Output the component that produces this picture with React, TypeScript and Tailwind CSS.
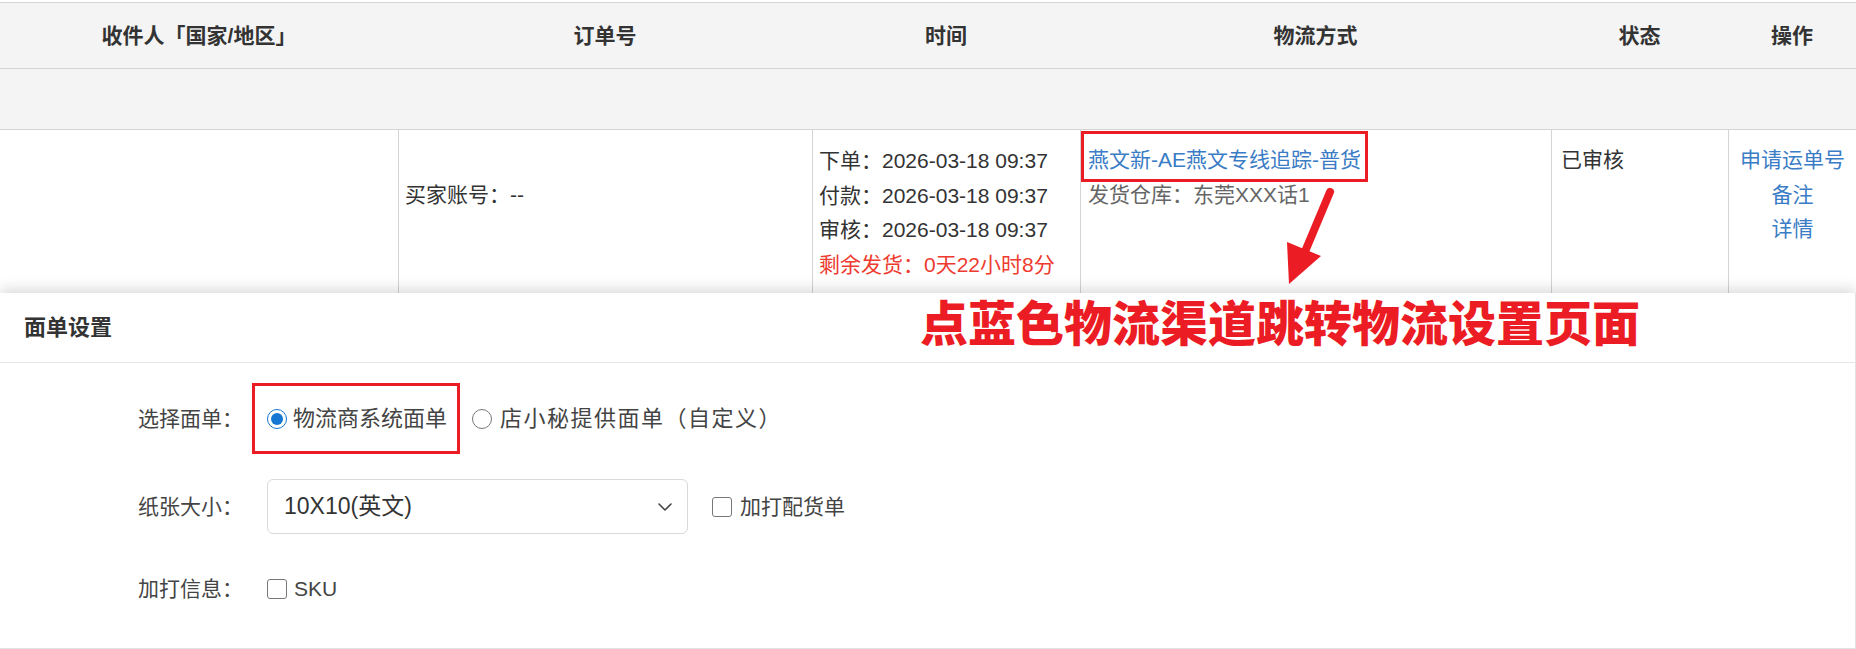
import React from "react";
import { ChevronDown } from "lucide-react";

const font = { fontFamily: '"Liberation Sans", "Noto Sans CJK SC", sans-serif' };

export default function App() {
  return (
    <div
      className="relative w-[1856px] h-[649px] overflow-hidden bg-white text-[21px] text-[#333]"
      style={font}
    >
      <div className="pt-[2px]">
        {/* header row */}
        <div className="grid grid-cols-[398px_414px_268px_471px_177px_128px] h-[67px] bg-[#f4f4f4] border-y border-[#d4d4d4] font-bold text-[#333]">
          <div className="flex items-center justify-center">收件人「国家/地区」</div>
          <div className="flex items-center justify-center">订单号</div>
          <div className="flex items-center justify-center">时间</div>
          <div className="flex items-center justify-center">物流方式</div>
          <div className="flex items-center justify-center">状态</div>
          <div className="flex items-center justify-center">操作</div>
        </div>
        {/* gray band */}
        <div className="h-[61px] bg-[#f4f4f4] border-b border-[#d4d4d4]" />
        {/* data row */}
        <div className="grid grid-cols-[398px_414px_268px_471px_177px_128px] h-[163px] leading-[34.5px]">
          <div />
          <div className="border-l border-[#d4d4d4] pl-[6px] pt-[48px]">买家账号：--</div>
          <div className="border-l border-[#d4d4d4] pl-[6px] pt-[14px]">
            <div>下单：2026-03-18 09:37</div>
            <div>付款：2026-03-18 09:37</div>
            <div>审核：2026-03-18 09:37</div>
            <div className="text-[#ee3b30]">剩余发货：0天22小时8分</div>
          </div>
          <div className="relative border-l border-[#d4d4d4] pl-[7px] pt-[13px]">
            <div className="text-[#3a7cc5]">燕文新-AE燕文专线追踪-普货</div>
            <div className="text-[#666]">发货仓库：东莞XXX话1</div>
            <div className="absolute left-[0px] top-[1px] w-[287px] h-[51px] border-[3.5px] border-[#ec1c24]" />
          </div>
          <div className="border-l border-[#d4d4d4] pl-[9px] pt-[13px]">已审核</div>
          <div className="border-l border-[#d4d4d4] pt-[13px] text-center text-[#3a7cc5]">
            <div>申请运单号</div>
            <div>备注</div>
            <div>详情</div>
          </div>
        </div>
      </div>

      {/* panel */}
      <div className="relative z-10 bg-white border-r border-b border-[#e2e2e2] shadow-[0_-5px_12px_rgba(0,0,0,0.13)]">
        <div className="h-[70px] flex items-center pl-[24px] font-bold text-[22px] border-b border-[#e6e6e6]">面单设置</div>
        <div className="pt-[20px] pb-[42px] text-[#444]">
          <div className="flex items-center">
            <div className="w-[252px] pl-[138px] shrink-0">选择面单：</div>
            <div className="flex items-center w-[208px] h-[71px] border-[3px] border-[#ec1c24] pl-[12px] shrink-0">
              <span className="shrink-0 w-[20px] h-[20px] rounded-full border-[1.5px] border-[#1677d2] flex items-center justify-center">
                <span className="w-[12px] h-[12px] rounded-full bg-[#1677d2]" />
              </span>
              <span className="ml-[6px] text-[22px] whitespace-nowrap">物流商系统面单</span>
            </div>
            <div className="flex items-center ml-[12px]">
              <span className="shrink-0 w-[20px] h-[20px] rounded-full border-[1.5px] border-[#777]" />
              <span className="ml-[8px] text-[22px] tracking-[1.5px] whitespace-nowrap">店小秘提供面单（自定义）</span>
            </div>
          </div>
          <div className="flex items-center mt-[25px]">
            <div className="w-[267px] pl-[138px] shrink-0">纸张大小：</div>
            <div className="flex items-center justify-between w-[421px] h-[55px] border border-[#d9d9d9] rounded-[6px] pl-[16px] pr-[10px] shrink-0">
              <span className="text-[#333] text-[23px]">10X10(英文)</span>
              <ChevronDown size={24} strokeWidth={1.6} className="text-[#444]" />
            </div>
            <div className="flex items-center ml-[24px]">
              <span className="shrink-0 w-[20px] h-[20px] rounded-[3px] border-[1.5px] border-[#777]" />
              <span className="ml-[8px] whitespace-nowrap">加打配货单</span>
            </div>
          </div>
          <div className="flex items-center mt-[38px] h-[34px]">
            <div className="w-[267px] pl-[138px] shrink-0">加打信息：</div>
            <span className="shrink-0 w-[20px] h-[20px] rounded-[3px] border-[1.5px] border-[#777]" />
            <span className="ml-[7px]">SKU</span>
          </div>
        </div>
        {/* annotation text */}
        <div
          className="absolute left-[920px] top-[-3px] text-[48px] font-black leading-[60px] text-[#ec1c24] whitespace-nowrap"
          style={{ fontFamily: '"Noto Sans CJK SC", sans-serif' }}
        >
          点蓝色物流渠道跳转物流设置页面
        </div>
      </div>

      {/* annotation arrow */}
      <svg className="absolute left-[1280px] top-[184px] z-20" width="60" height="104" viewBox="0 0 60 104">
        <path d="M50 8 L24 70" stroke="#ec1c24" strokeWidth="8" strokeLinecap="round" fill="none" />
        <path d="M7 58 L41 72 L9 100 Z" fill="#ec1c24" />
      </svg>
    </div>
  );
}
